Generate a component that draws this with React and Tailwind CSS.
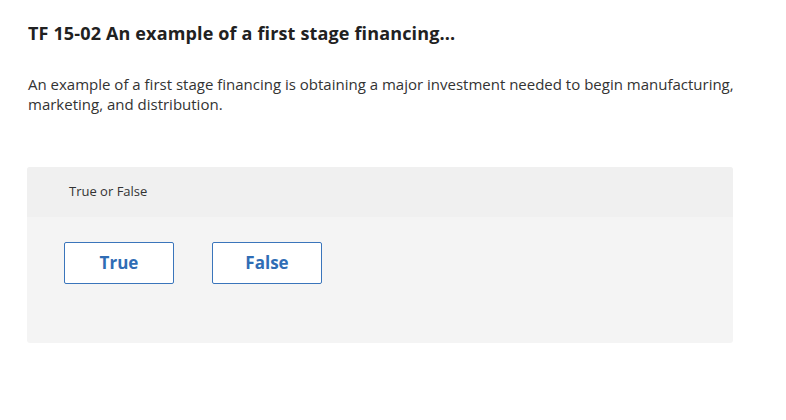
export default function App() {
  return (
    <div className="min-h-[420px] w-[786px] bg-white font-['Open_Sans',sans-serif] text-[#212121]">
      <div className="pl-[28px] pr-[40px] pt-[20px]">
        <h1 className="text-[18px] font-bold leading-[26px] tracking-[0.15px]">
          TF 15-02 An example of a first stage financing...
        </h1>
        <p className="mt-[28px] text-[15px] leading-[20px] text-[#333]">
          An example of a first stage financing is obtaining a major investment needed to begin manufacturing,
          marketing, and distribution.
        </p>
      </div>

      <div className="ml-[27px] mt-[53px] w-[706px] overflow-hidden rounded-[3px] bg-[#f4f4f4]">
        <div className="flex h-[50px] items-center bg-[#f0f0f0] pl-[42px] text-[13px] text-[#333]">
          True or False
        </div>
        <div className="flex gap-[38px] px-[37px] pt-[25px] pb-[59px]">
          <button className="h-[42px] w-[110px] rounded-[2px] border border-[#3a75bb] bg-white text-[17px] font-bold text-[#2f6db5]">
            True
          </button>
          <button className="h-[42px] w-[110px] rounded-[2px] border border-[#3a75bb] bg-white text-[17px] font-bold text-[#2f6db5]">
            False
          </button>
        </div>
      </div>
    </div>
  );
}
